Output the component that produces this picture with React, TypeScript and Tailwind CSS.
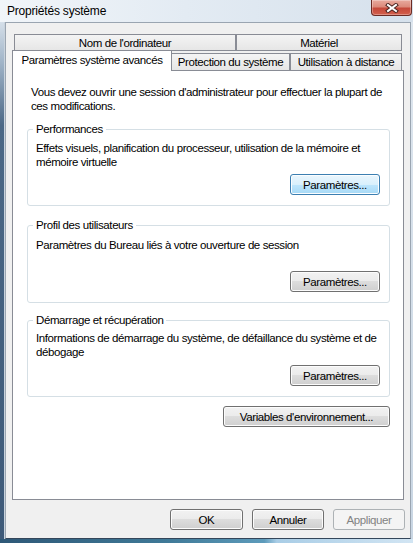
import React from "react";

const FONT = "font-['Liberation_Sans',Arial,sans-serif]";

type BtnKind = "normal" | "focus" | "disabled";

function Btn({ children, kind = "normal", className = "" }: { children: React.ReactNode; kind?: BtnKind; className?: string }) {
  const base = "flex items-center justify-center rounded-[3px] border leading-[14px] whitespace-nowrap";
  const k =
    kind === "focus"
      ? "border-[#3c7fb1] bg-[linear-gradient(180deg,#eaf6fd_0%,#d9f0fc_50%,#bee6fd_50%,#a7d9f5_100%)] shadow-[inset_0_0_0_1px_#fbfdff] text-black"
      : kind === "disabled"
      ? "border-[#adb2b5] bg-[#f4f4f4] text-[#838383]"
      : "border-[#707070] bg-[linear-gradient(180deg,#f2f2f2_0%,#ebebeb_50%,#dddddd_50%,#cfcfcf_100%)] shadow-[inset_0_0_0_1px_#fcfcfc] text-black";
  return <div className={`${base} ${k} ${className}`}>{children}</div>;
}

function Group({
  label,
  children,
  className,
  pt,
}: {
  label: string;
  children: React.ReactNode;
  className: string;
  pt: string;
}) {
  return (
    <div className={`relative flex flex-col rounded-[3px] border border-[#d5dfe5] pl-[8px] pr-[9px] pb-[10px] ${pt} ${className}`}>
      <span className="absolute left-[5px] top-[-8px] bg-white px-[3px] leading-[14px]">{label}</span>
      {children}
      <Btn kind={label === "Performances" ? "focus" : "normal"} className="mt-auto self-end w-[90px] h-[21px]">
        Paramètres...
      </Btn>
    </div>
  );
}

export default function App() {
  return (
    <div className={`${FONT} text-[11.5px] tracking-[-0.4px] text-black w-[413px] h-[543px] flex flex-col overflow-hidden`}>
      {/* Title bar */}
      <div className="h-[22px] flex items-start bg-[linear-gradient(90deg,#f1f5f9_0%,#e3ebf3_45%,#d6e1ec_100%)]">
        <div className="pl-[7px] pt-[4px] text-[12px] tracking-[-0.2px] leading-[14px]">Propriétés système</div>
        <div className="ml-auto mr-[1px] w-[41px] h-[16px] rounded-b-[4px] border border-t-0 border-[#6b2b24] bg-[linear-gradient(180deg,#e8aa9e_0%,#dc8a7b_45%,#c5493a_55%,#d3604d_100%)] shadow-[inset_0_0_0_1px_rgba(255,255,255,0.3)] flex items-center justify-center">
          <svg width="14" height="10" viewBox="0 0 14 10">
            <path d="M3 2 L11 8 M11 2 L3 8" stroke="#4a2420" strokeWidth="4" strokeLinecap="square" fill="none" />
            <path d="M3 2 L11 8 M11 2 L3 8" stroke="#ffffff" strokeWidth="2" strokeLinecap="square" fill="none" />
          </svg>
        </div>
      </div>

      {/* Middle */}
      <div className="flex-1 flex">
        <div className="w-[5px] border-r border-[#c9d3dd] bg-[linear-gradient(180deg,#d5dfe9_0%,#9fb3c7_8%,#4b6886_20%,#3e5a79_100%)]" />
        <div className="flex-1 flex flex-col bg-[#f0f0f0] border border-[#9aa5b1] border-b-[#34465a]">
          {/* Tabs row 1 */}
          <div className="mt-[11px] pl-[8px] flex h-[17px]">
            <div className="w-[222px] h-[17px] border border-[#898c95] bg-[linear-gradient(180deg,#f4f4f4,#e6e6e6)] flex items-center justify-center leading-[14px]">
              Nom de l'ordinateur
            </div>
            <div className="w-[166px] h-[17px] border border-[#898c95] bg-[linear-gradient(180deg,#f4f4f4,#e6e6e6)] flex items-center justify-center leading-[14px]">
              Matériel
            </div>
          </div>
          {/* Tabs row 2 */}
          <div className="-mt-[1px] pl-[8px] flex items-end h-[20px]">
            <div className="relative z-10 -ml-[2px] -mb-[1px] w-[160px] h-[21px] border border-b-0 border-[#898c95] bg-white flex items-start justify-center pt-[2px] leading-[14px]">
              Paramètres système avancés
            </div>
            <div className="-ml-[1px] w-[119px] h-[17px] border border-b-0 border-[#898c95] bg-[linear-gradient(180deg,#f4f4f4,#e6e6e6)] flex items-center justify-center leading-[14px]">
              Protection du système
            </div>
            <div className="w-[112px] h-[17px] border border-b-0 border-[#898c95] bg-[linear-gradient(180deg,#f4f4f4,#e6e6e6)] flex items-center justify-center leading-[14px]">
              Utilisation à distance
            </div>
          </div>

          {/* Panel */}
          <div className="ml-[6px] w-[392px] h-[430px] border border-[#898c95] bg-white flex flex-col pl-[14px] pr-[13px]">
            <p className="mt-[14px] ml-[4px] leading-[14px] whitespace-nowrap">
              Vous devez ouvrir une session d'administrateur pour effectuer la plupart de
              <br />
              ces modifications.
            </p>

            <Group label="Performances" className="mt-[16px] h-[77px]" pt="pt-[11px]">
              <p className="leading-[14px] whitespace-nowrap">
                Effets visuels, planification du processeur, utilisation de la mémoire et
                <br />
                mémoire virtuelle
              </p>
            </Group>

            <Group label="Profil des utilisateurs" className="mt-[19px] h-[78px]" pt="pt-[12px]">
              <p className="leading-[14px] whitespace-nowrap">Paramètres du Bureau liés à votre ouverture de session</p>
            </Group>

            <Group label="Démarrage et récupération" className="mt-[17px] h-[77px]" pt="pt-[10px]">
              <p className="leading-[14px] whitespace-nowrap">
                Informations de démarrage du système, de défaillance du système et de
                <br />
                débogage
              </p>
            </Group>

            <Btn className="mt-[9px] self-end w-[167px] h-[21px]">Variables d'environnement...</Btn>
          </div>

          {/* Bottom buttons */}
          <div className="mt-[9px] pr-[5px] flex justify-end gap-[9px]">
            <Btn className="w-[73px] h-[21px]">OK</Btn>
            <Btn className="w-[72px] h-[21px]">Annuler</Btn>
            <Btn kind="disabled" className="w-[72px] h-[21px]">Appliquer</Btn>
          </div>
        </div>
        <div className="w-[2px] bg-[linear-gradient(180deg,#dfe7ef,#c9d6e3)]" />
      </div>

      {/* Bottom frame */}
      <div className="h-[4px] bg-[linear-gradient(90deg,#2e5877_0%,#3f7997_40%,#5d9bbb_64%,#a9cde6_67%,#d2e5f3_100%)]" />
    </div>
  );
}
